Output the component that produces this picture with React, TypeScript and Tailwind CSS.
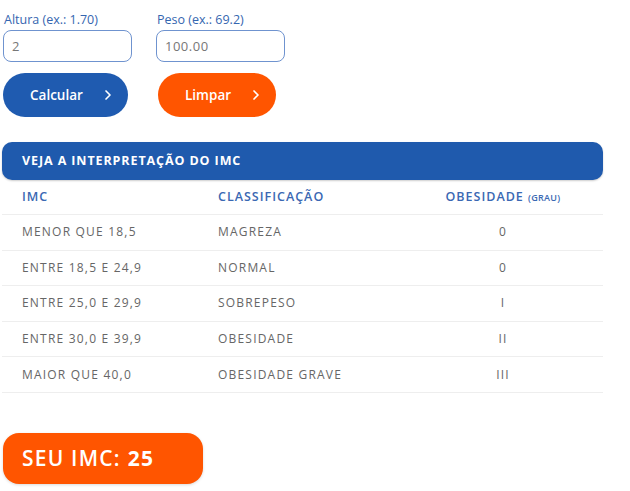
import React, { useState } from 'react';
import { ChevronRight } from 'lucide-react';

const rows = [
  { imc: 'MENOR QUE 18,5', cls: 'MAGREZA', grau: '0' },
  { imc: 'ENTRE 18,5 E 24,9', cls: 'NORMAL', grau: '0' },
  { imc: 'ENTRE 25,0 E 29,9', cls: 'SOBREPESO', grau: 'I' },
  { imc: 'ENTRE 30,0 E 39,9', cls: 'OBESIDADE', grau: 'II' },
  { imc: 'MAIOR QUE 40,0', cls: 'OBESIDADE GRAVE', grau: 'III' },
];

export default function App() {
  const [altura, setAltura] = useState('2');
  const [peso, setPeso] = useState('100.00');

  return (
    <div className="w-[630px] h-[491px] bg-white font-['Open_Sans',sans-serif] pl-[3px] pt-[12px]">
      <div className="flex gap-[24px]">
        <div className="flex flex-col">
          <label className="text-[12.5px] leading-[15px] text-[#3566b0] pl-[1px]">Altura (ex.: 1.70)</label>
          <input
            value={altura}
            onChange={(e) => setAltura(e.target.value)}
            className="mt-[3px] w-[129px] h-[32px] rounded-[8px] border border-[#6f93cf] px-[8px] text-[13px] tracking-[0.5px] text-[#777] outline-none"
          />
        </div>
        <div className="flex flex-col">
          <label className="text-[12.5px] leading-[15px] text-[#3566b0] pl-[1px]">Peso (ex.: 69.2)</label>
          <input
            value={peso}
            onChange={(e) => setPeso(e.target.value)}
            className="mt-[3px] w-[129px] h-[32px] rounded-[8px] border border-[#6f93cf] px-[8px] text-[13px] tracking-[0.5px] text-[#777] outline-none"
          />
        </div>
      </div>

      <div className="flex gap-[30px] mt-[11px]">
        <button className="w-[125px] h-[44px] rounded-full bg-[#1f5bb0] text-white text-[13.5px] font-semibold flex items-center pl-[27px] pr-[12px] justify-between">
          <span>Calcular</span>
          <ChevronRight size={16} strokeWidth={2.5} />
        </button>
        <button className="w-[118px] h-[44px] rounded-full bg-[#ff5500] text-white text-[13.5px] font-semibold flex items-center pl-[27px] pr-[12px] justify-between">
          <span>Limpar</span>
          <ChevronRight size={16} strokeWidth={2.5} />
        </button>
      </div>

      <div className="w-[601px] ml-[-1px] mt-[25px]">
        <div className="h-[38px] rounded-[10px] bg-[#1f5aad] text-white text-[12.5px] tracking-[0.9px] font-bold flex items-center pl-[20px] shadow-[0_1px_2px_rgba(0,0,0,0.2)]">
          VEJA A INTERPRETAÇÃO DO IMC
        </div>
        <div className="h-[35px] grid grid-cols-[196px_223px_124px] items-center pl-[20px] text-[12.5px] tracking-[1px] font-semibold text-[#3a68b3] border-b border-[#eeeeee]">
          <span>IMC</span>
          <span>CLASSIFICAÇÃO</span>
          <span className="text-center">
            OBESIDADE <span className="text-[9px] tracking-[0.3px]">(GRAU)</span>
          </span>
        </div>
        {rows.map((r) => (
          <div
            key={r.imc}
            className="h-[35.6px] grid grid-cols-[196px_223px_124px] items-center pl-[20px] text-[12px] tracking-[1.2px] text-[#666] border-b border-[#eeeeee]"
          >
            <span>{r.imc}</span>
            <span>{r.cls}</span>
            <span className="text-center">{r.grau}</span>
          </div>
        ))}
      </div>

      <div className="mt-[40px] w-[200px] h-[51px] rounded-[16px] bg-[#ff5500] text-white flex items-center pl-[19px] text-[21px] tracking-[1.2px] font-semibold shadow-[0_1px_3px_rgba(0,0,0,0.15)]">
        SEU IMC: <span className="font-bold ml-[7px]">25</span>
      </div>
    </div>
  );
}
